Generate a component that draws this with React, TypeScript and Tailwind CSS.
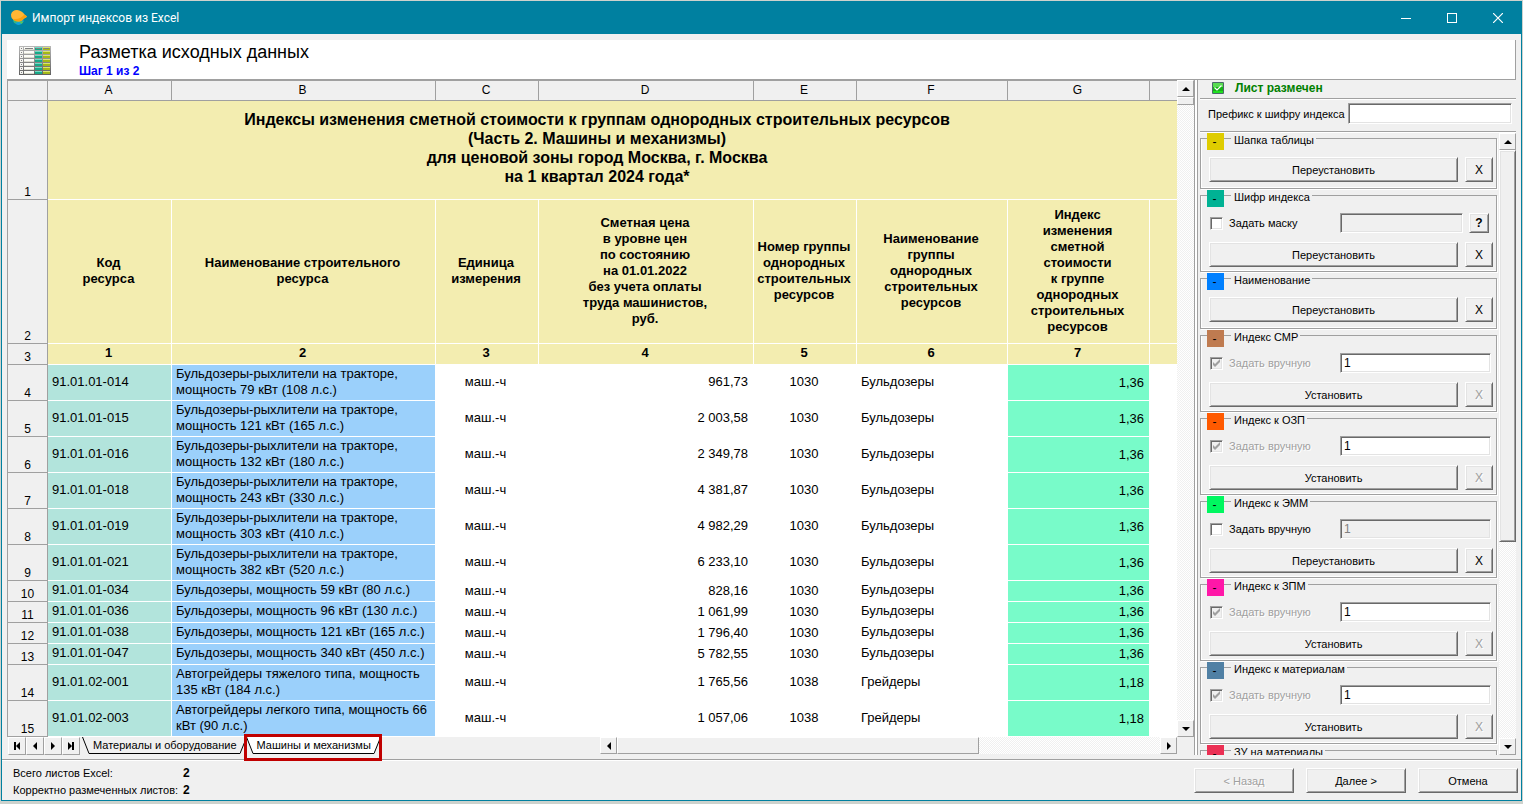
import { useState } from 'react';
import clsx from 'clsx';

const raised =
  'border border-t-white border-l-white border-r-[#696969] border-b-[#696969] bg-[#f0f0f0] shadow-[inset_1px_1px_0_#e3e3e3,inset_-1px_-1px_0_#a0a0a0]';
const sunken =
  'border border-t-[#a0a0a0] border-l-[#a0a0a0] border-r-white border-b-white shadow-[inset_1px_1px_0_#696969,inset_-1px_-1px_0_#e3e3e3]';
const flat = 'border border-t-white border-l-white border-r-[#a0a0a0] border-b-[#a0a0a0] bg-[#f0f0f0]';
const track = 'bg-[repeating-conic-gradient(#f0f0f0_0_25%,#fff_0_50%)] bg-[length:2px_2px]';
const embossed = 'text-[#a0a0a0] [text-shadow:1px_1px_0_#fff]';

type Row = { code: string; name: string; price: string; group: string; kind: string; index: string; tall?: boolean };

const rows: Row[] = [
  { code: '91.01.01-014', name: 'Бульдозеры-рыхлители на тракторе, мощность 79 кВт (108 л.с.)', price: '961,73', group: '1030', kind: 'Бульдозеры', index: '1,36', tall: true },
  { code: '91.01.01-015', name: 'Бульдозеры-рыхлители на тракторе, мощность 121 кВт (165 л.с.)', price: '2 003,58', group: '1030', kind: 'Бульдозеры', index: '1,36', tall: true },
  { code: '91.01.01-016', name: 'Бульдозеры-рыхлители на тракторе, мощность 132 кВт (180 л.с.)', price: '2 349,78', group: '1030', kind: 'Бульдозеры', index: '1,36', tall: true },
  { code: '91.01.01-018', name: 'Бульдозеры-рыхлители на тракторе, мощность 243 кВт (330 л.с.)', price: '4 381,87', group: '1030', kind: 'Бульдозеры', index: '1,36', tall: true },
  { code: '91.01.01-019', name: 'Бульдозеры-рыхлители на тракторе, мощность 303 кВт (410 л.с.)', price: '4 982,29', group: '1030', kind: 'Бульдозеры', index: '1,36', tall: true },
  { code: '91.01.01-021', name: 'Бульдозеры-рыхлители на тракторе, мощность 382 кВт (520 л.с.)', price: '6 233,10', group: '1030', kind: 'Бульдозеры', index: '1,36', tall: true },
  { code: '91.01.01-034', name: 'Бульдозеры, мощность 59 кВт (80 л.с.)', price: '828,16', group: '1030', kind: 'Бульдозеры', index: '1,36' },
  { code: '91.01.01-036', name: 'Бульдозеры, мощность 96 кВт (130 л.с.)', price: '1 061,99', group: '1030', kind: 'Бульдозеры', index: '1,36' },
  { code: '91.01.01-038', name: 'Бульдозеры, мощность 121 кВт (165 л.с.)', price: '1 796,40', group: '1030', kind: 'Бульдозеры', index: '1,36' },
  { code: '91.01.01-047', name: 'Бульдозеры, мощность 340 кВт (450 л.с.)', price: '5 782,55', group: '1030', kind: 'Бульдозеры', index: '1,36' },
  { code: '91.01.02-001', name: 'Автогрейдеры тяжелого типа, мощность 135 кВт (184 л.с.)', price: '1 765,56', group: '1038', kind: 'Грейдеры', index: '1,18', tall: true },
  { code: '91.01.02-003', name: 'Автогрейдеры легкого типа, мощность 66 кВт (90 л.с.)', price: '1 057,06', group: '1038', kind: 'Грейдеры', index: '1,18', tall: true },
];

const headings: string[][] = [
  ['Код', 'ресурса'],
  ['Наименование строительного', 'ресурса'],
  ['Единица', 'измерения'],
  ['Сметная цена', 'в уровне цен', 'по состоянию', 'на 01.01.2022', 'без учета оплаты', 'труда машинистов,', 'руб.'],
  ['Номер группы', 'однородных', 'строительных', 'ресурсов'],
  ['Наименование', 'группы', 'однородных', 'строительных', 'ресурсов'],
  ['Индекс', 'изменения', 'сметной', 'стоимости', 'к группе', 'однородных', 'строительных', 'ресурсов'],
];

type Group = {
  title: string;
  color: string;
  field?: 'mask' | 'manual';
  fixed?: boolean;
  action: string;
};

const groups: Group[] = [
  { title: 'Шапка таблицы', color: 'bg-[#dfcc00]', action: 'Переустановить' },
  { title: 'Шифр индекса', color: 'bg-[#00b294]', field: 'mask', action: 'Переустановить' },
  { title: 'Наименование', color: 'bg-[#0080ff]', action: 'Переустановить' },
  { title: 'Индекс СМР', color: 'bg-[#bf7b50]', field: 'manual', fixed: true, action: 'Установить' },
  { title: 'Индекс к ОЗП', color: 'bg-[#ff5a00]', field: 'manual', fixed: true, action: 'Установить' },
  { title: 'Индекс к ЭММ', color: 'bg-[#00f760]', field: 'manual', action: 'Переустановить' },
  { title: 'Индекс к ЗПМ', color: 'bg-[#ff17a8]', field: 'manual', fixed: true, action: 'Установить' },
  { title: 'Индекс к материалам', color: 'bg-[#5080a4]', field: 'manual', fixed: true, action: 'Установить' },
  { title: 'ЗУ на материалы', color: 'bg-[#eb3054]', field: 'manual', fixed: true, action: 'Установить' },
];

function Arrow({ dir }: { dir: 'up' | 'down' | 'left' | 'right' }) {
  const shapes = {
    up: 'M4 2 L8 6 H0 Z',
    down: 'M0 2 H8 L4 6 Z',
    left: 'M2 4 L6 0 V8 Z',
    right: 'M6 4 L2 0 V8 Z',
  };
  return (
    <svg width="8" height="8" viewBox="0 0 8 8" aria-hidden="true">
      <path d={shapes[dir]} fill="#000" />
    </svg>
  );
}

function ScrollButton({ dir, label }: { dir: 'up' | 'down' | 'left' | 'right'; label: string }) {
  return (
    <button aria-label={label} className={clsx(flat, 'flex size-[17px] shrink-0 items-center justify-center')}>
      <Arrow dir={dir} />
    </button>
  );
}

function LemonIcon() {
  return (
    <svg width="16" height="16" viewBox="0 0 16 16" aria-hidden="true">
      <path d="M2 9L13 10.5Q11 15 7 15Q3 14 2 9Z" fill="#12a5d8" />
      <path d="M2 9L8 11L4 13.5Q2 12 2 9Z" fill="#3cb878" />
      <path d="M8 11.5L12.5 11.5L10.5 14Z" fill="#58c850" />
      <path d="M0 4.5Q1 0 6 0Q11 .5 13.5 4.5L16 6.5Q15 8 13 8.5Q11 11.5 7.500 11.5Q3 11 1 8.500Q0 7 0 4.500Z" fill="#ffb634" />
      <path d="M1 8.500Q8 10.500 13.5 4.500L16 6.500Q15 8 13 8.500Q11 11.500 7.500 11.500Q3 11 1 8.500Z" fill="#f9a010" />
    </svg>
  );
}

function SheetIcon() {
  const lines = [0, 4, 8, 12, 16, 20, 24];
  return (
    <svg width="32" height="29" viewBox="0 0 32 29" shapeRendering="crispEdges" aria-hidden="true">
      <defs>
        <linearGradient id="sheet-grid" x1="0" y1="0" x2="0" y2="1">
          <stop offset="0" stopColor="#b8b8b8" />
          <stop offset="1" stopColor="#606060" />
        </linearGradient>
      </defs>
      <rect width="32" height="29" fill="url(#sheet-grid)" />
      {lines.map((y) => (
        <g key={y}>
          <rect x="1" y={y + 1} width="3" height="3" fill="#f4f4f0" />
          <rect x="2" y={y + 2} width="1" height="1" fill="#808080" />
          <rect x="5" y={y + 1} width="10" height="3" fill="#fcfcf8" />
          <rect x="5" y={y + 3} width="10" height="1" fill="#dcdcd0" />
          <rect x="16" y={y + 1} width="7" height="3" fill="#18a888" />
          <rect x="16" y={y + 1} width="7" height="1" fill="#70dcc4" />
          <rect x="24" y={y + 1} width="7" height="3" fill="#a4b818" />
          <rect x="24" y={y + 1} width="7" height="1" fill="#dce470" />
        </g>
      ))}
      <path d="M6 2.5H14M17 2.5H22M25 2.5H30" stroke="#808080" />
    </svg>
  );
}

function TitleBar() {
  return (
    <div className="flex h-[33px] shrink-0 items-center bg-[#0080a0] pl-[9px] text-white">
      <LemonIcon />
      <h1 className="flex-1 pl-[5px] font-[Roboto,sans-serif] text-[12px] leading-4">Импорт индексов из Excel</h1>
      <button aria-label="Свернуть" className="flex h-full w-[46px] items-center justify-center">
        <svg width="10" height="10" viewBox="0 0 10 10" shapeRendering="crispEdges">
          <path d="M0 5.5H10" stroke="#fff" />
        </svg>
      </button>
      <button aria-label="Развернуть" className="flex h-full w-[46px] items-center justify-center">
        <svg width="10" height="10" viewBox="0 0 10 10" shapeRendering="crispEdges">
          <path d="M.5 .5H9.5V9.5H.5Z" stroke="#fff" fill="none" />
        </svg>
      </button>
      <button aria-label="Закрыть" className="flex h-full w-[46px] items-center justify-center">
        <svg width="10" height="10" viewBox="0 0 10 10">
          <path d="M0 0L10 10M10 0L0 10" stroke="#fff" strokeWidth="1.2" />
        </svg>
      </button>
    </div>
  );
}

function SheetTable() {
  const th = 'border-r border-b border-[#a0a0a0] bg-[#f0f0f0] font-normal text-[12px] leading-[14px]';
  const num = clsx(th, 'border-l align-bottom');
  const head = 'border-r border-b border-white bg-[#f3edb0] pr-[2px] pb-[2px] text-center font-bold';
  return (
    <table className="w-full table-fixed border-separate border-spacing-0 text-[13px] leading-4">
      <colgroup>
        <col className="w-[41px]" />
        <col className="w-[124px]" />
        <col className="w-[264px]" />
        <col className="w-[103px]" />
        <col className="w-[215px]" />
        <col className="w-[103px]" />
        <col className="w-[151px]" />
        <col className="w-[142px]" />
        <col />
      </colgroup>
      <thead>
        <tr className="h-[21px]">
          <th className={clsx(th, 'border-t border-l')} />
          {['A', 'B', 'C', 'D', 'E', 'F', 'G'].map((c) => (
            <th key={c} scope="col" className={clsx(th, 'border-t pr-[2px] pb-[2px]')}>{c}</th>
          ))}
          <th className="border-t border-b border-[#a0a0a0] bg-[#f0f0f0]" />
        </tr>
      </thead>
      <tbody>
        <tr className="h-[99px]">
          <th scope="row" className={num}>1</th>
          <td colSpan={7} className="border-b border-white bg-[#f3edb0] pt-[9px] pr-1 text-center align-top text-[16px] leading-[19px] font-bold">
            Индексы изменения сметной стоимости к группам однородных строительных ресурсов
            <br />
            (Часть 2. Машины и механизмы)
            <br />
            для ценовой зоны город Москва, г. Москва
            <br />
            на 1 квартал 2024 года*
          </td>
          <td className="border-b border-white bg-[#f3edb0]" />
        </tr>
        <tr className="h-[144px]">
          <th scope="row" className={num}>2</th>
          {headings.map((lines, i) => (
            <td key={i} className={head}>
              {lines.map((line) => (
                <div key={line}>{line}</div>
              ))}
            </td>
          ))}
          <td className="border-b border-white bg-[#f3edb0]" />
        </tr>
        <tr className="h-[21px]">
          <th scope="row" className={num}>3</th>
          {headings.map((_, i) => (
            <td key={i} className={head}>{i + 1}</td>
          ))}
          <td className="border-b border-white bg-[#f3edb0]" />
        </tr>
        {rows.map((row, i) => (
          <tr key={row.code} className={row.tall ? 'h-[36px]' : 'h-[21px]'}>
            <th scope="row" className={num}>{i + 4}</th>
            <td className="border-r border-b border-white bg-[#b2e4dc] pb-[2px] pl-1">{row.code}</td>
            <td className="border-r border-b border-white bg-[#9bd0fb] pb-[2px] pl-1">{row.name}</td>
            <td className="bg-white pr-1 pb-[2px] text-center">маш.-ч</td>
            <td className="bg-white pr-[6px] pb-[2px] text-right">{row.price}</td>
            <td className="bg-white pr-[3px] pb-[2px] text-center">{row.group}</td>
            <td className="bg-white pb-[3px] pl-1">{row.kind}</td>
            <td className="border-r border-b border-white bg-[#78fbc9] pr-[5px] text-right">{row.index}</td>
            <td className="bg-white" />
          </tr>
        ))}
      </tbody>
    </table>
  );
}

function SheetTab({ label, active, onClick }: { label: string; active: boolean; onClick: () => void }) {
  const fill = active ? '#fff' : '#f0f0f0';
  return (
    <button role="tab" aria-selected={active} onClick={onClick} className="flex h-[18px]">
      <svg width="8" height="18" viewBox="0 0 8 18" aria-hidden="true">
        <path d="M0 0L7 16.5H8V0Z" fill={fill} />
        <path d="M.5 0L7 16.5H8" fill="none" stroke="#000" />
      </svg>
      <span className={clsx('h-[17px] border-b border-black px-[3px] leading-[17px]', active ? 'bg-white' : 'bg-[#f0f0f0]')}>{label}</span>
      <svg width="6" height="18" viewBox="0 0 6 18" aria-hidden="true">
        <path d="M0 16.5L5.5 0H0Z" fill={fill} />
        <path d="M0 16.5L5.5 3" fill="none" stroke="#000" />
      </svg>
    </button>
  );
}

function SheetBar() {
  const [active, setActive] = useState(1);
  const navs = [
    { label: 'Первый лист', d: 'M1 0H3V8H1ZM7 0V8L3 4Z' },
    { label: 'Предыдущий лист', d: 'M6 0V8L2 4Z' },
    { label: 'Следующий лист', d: 'M2 0V8L6 4Z' },
    { label: 'Последний лист', d: 'M5 0H7V8H5ZM1 0V8L5 4Z' },
  ];
  return (
    <div className="flex h-[18px] shrink-0 pl-px">
      {navs.map((nav) => (
        <button key={nav.label} aria-label={nav.label} className={clsx(flat, 'flex w-[18px] items-center justify-center')}>
          <svg width="8" height="8" viewBox="0 0 8 8" aria-hidden="true">
            <path d={nav.d} />
          </svg>
        </button>
      ))}
      <div role="tablist" className="ml-[2px] flex">
        <SheetTab label="Материалы и оборудование" active={active === 0} onClick={() => setActive(0)} />
        <div className="relative">
          <SheetTab label="Машины и механизмы" active={active === 1} onClick={() => setActive(1)} />
          <div className="pointer-events-none absolute -inset-x-[2px] -top-[3px] -bottom-[6px] z-10 border-3 border-[#c00000]" />
        </div>
      </div>
      <div className="flex-1" />
      <div className="flex w-[577px]">
        <ScrollButton dir="left" label="Прокрутить влево" />
        <div className={clsx(track, 'h-[17px] flex-1')}>
          <div className={clsx(flat, 'h-full w-2/3')} />
        </div>
        <ScrollButton dir="right" label="Прокрутить вправо" />
      </div>
    </div>
  );
}

function Check({ label, checked, disabled }: { label: string; checked: boolean; disabled?: boolean }) {
  return (
    <label className="flex w-[130px] shrink-0 items-center">
      <span className="relative size-[13px]">
        <input
          type="checkbox"
          defaultChecked={checked}
          disabled={disabled}
          className={clsx(sunken, 'peer block size-[13px] appearance-none', disabled ? 'bg-[#f0f0f0]' : 'bg-white')}
        />
        <svg className="pointer-events-none absolute inset-0 hidden peer-checked:block" width="13" height="13" viewBox="0 0 13 13" aria-hidden="true">
          <path d="M3 5V8L5 10L10 5V2L5 7Z" fill={disabled ? '#a0a0a0' : '#000'} />
        </svg>
      </span>
      <span className={clsx('pl-[6px]', disabled && embossed)}>{label}</span>
    </label>
  );
}

function GroupBox({ group }: { group: Group }) {
  const { title, color, field, fixed, action } = group;
  return (
    <fieldset
      className={clsx(
        'mb-px min-w-0 shrink-0 border border-[#a0a0a0] pr-[3px] pl-2 shadow-[inset_1px_-1px_0_#fff,1px_1px_0_#fff]',
        field ? 'pt-3 pb-1' : 'pt-[13px] pb-[6px]',
      )}
    >
      <legend className="-ml-[2px] flex h-[11px] bg-[#f0f0f0] pr-[2px]">
        <button aria-label={`Свернуть: ${title}`} className={clsx(color, 'size-[17px] pr-[2px] text-[12px] leading-[14px]')}>
          -
        </button>
        <span className="mt-[5px] mr-[3px] h-px w-[7px] bg-[#a0a0a0]" />
        <span className="leading-[14px]">{title}</span>
      </legend>
      {field && (
        <div className="mb-[9px] flex h-5 items-center pl-px">
          <Check label={field === 'mask' ? 'Задать маску' : 'Задать вручную'} checked={!!fixed} disabled={fixed} />
          <input
            aria-label={title}
            defaultValue={field === 'mask' ? '' : '1'}
            disabled={!fixed}
            className={clsx(sunken, 'mr-[2px] h-full min-w-0 flex-1 px-[3px] text-[12px]', fixed ? 'bg-white' : 'bg-[#f0f0f0] text-[#808080]')}
          />
          {field === 'mask' && (
            <button aria-label="Справка" className={clsx(raised, 'mx-1 h-5 w-5 shrink-0 text-[12px] font-bold')}>?</button>
          )}
        </div>
      )}
      <div className="flex h-[25px] gap-[7px]">
        <button className={clsx(raised, 'flex-1')}>{action}</button>
        <button aria-label={`Очистить: ${title}`} disabled={fixed} className={clsx(raised, 'w-7 text-[12px]', fixed && embossed)}>X</button>
      </div>
    </fieldset>
  );
}

function SidePanel() {
  return (
    <aside className="flex w-[316px] shrink-0 flex-col">
      <div className="flex h-[19px] items-center border-b border-[#a0a0a0] pb-[3px] pl-3">
        <svg width="12" height="12" viewBox="0 0 12 12" aria-hidden="true">
          <rect width="12" height="12" rx="1" fill="#4a6a68" />
          <rect x="1" y="1" width="10" height="10" fill="#14b414" />
          <rect x="1" y="1" width="10" height="4" fill="#58dc50" />
          <rect x="1" y="9" width="10" height="2" fill="#20e020" />
          <path d="M2.500 5.500L5 8L9.500 3.500" fill="none" stroke="#fff" strokeWidth="1.200" />
        </svg>
        <strong className="pl-[11px] text-[12px] text-[#008000]">Лист размечен</strong>
      </div>
      <div className="flex h-[33px] items-center border-t border-b border-t-white border-b-[#a0a0a0] pr-1 pb-1 pl-2">
        <label htmlFor="prefix" className="w-[140px] whitespace-nowrap">Префикс к шифру индекса</label>
        <input id="prefix" className={clsx(sunken, 'h-[21px] min-w-0 flex-1 bg-white px-[3px]')} />
      </div>
      <div className="flex min-h-0 flex-1 border-t border-white">
        <div className="flex min-w-0 flex-1 flex-col overflow-hidden pr-[2px]">
          {groups.map((g) => (
            <GroupBox key={g.title} group={g} />
          ))}
        </div>
        <div className={clsx(track, 'flex w-[17px] flex-col')}>
          <ScrollButton dir="up" label="Прокрутить вверх" />
          <div className="flex-1">
            <div className={clsx(raised, 'h-2/3 w-full')} />
          </div>
          <ScrollButton dir="down" label="Прокрутить вниз" />
        </div>
      </div>
    </aside>
  );
}

export default function App() {
  return (
    <div className="flex h-screen min-h-[400px] flex-col overflow-hidden bg-[#cdd2cd] pt-px pr-px pb-[3px] pl-px font-['Liberation_Sans',Arial,sans-serif] text-[11px] leading-[14px] text-black">
      <div className="flex min-h-0 flex-1 flex-col border-r border-b border-l border-[#0080a0] bg-[#f0f0f0]">
        <TitleBar />

        {/* Wizard header */}
        <header className="mx-[5px] mt-[6px] flex h-10 shrink-0 gap-7 border-r border-b border-[#a0a0a0] bg-white pt-[6px] pl-3">
          <SheetIcon />
          <div className="-mt-1">
            <h2 className="text-[18px] leading-5">Разметка исходных данных</h2>
            <p className="pt-[2px] text-[12px] font-bold text-[#0000ff]">Шаг 1 из 2</p>
          </div>
        </header>

        <main className="mx-[5px] flex min-h-0 flex-1">
          <div className="flex min-w-0 flex-1 flex-col">
            <div className="flex min-h-0 flex-1">
              <div className="min-w-0 flex-1 overflow-hidden bg-white">
                <SheetTable />
              </div>
              <div className={clsx(track, 'flex w-[17px] flex-col')}>
                <ScrollButton dir="up" label="Прокрутить вверх" />
                <div className="flex-1">
                  <div className={clsx(flat, 'h-[8px] w-full')} />
                </div>
                <ScrollButton dir="down" label="Прокрутить вниз" />
              </div>
            </div>
            <div className="pr-[17px]">
              <SheetBar />
            </div>
          </div>
          <div className="mr-[2px] w-1 border-r border-l border-[#a0a0a0] bg-white" />
          <SidePanel />
        </main>

        <footer className="mt-1 flex h-[41px] shrink-0 items-start justify-between border-t border-[#a0a0a0] pl-[11px] shadow-[inset_0_1px_0_#fff]">
          <dl className="grid grid-cols-[170px_auto] gap-y-[3px] pt-[6px]">
            <dt>Всего листов Excel:</dt>
            <dd className="text-[12px] font-bold">2</dd>
            <dt className="whitespace-nowrap">Корректно размеченных листов:</dt>
            <dd className="text-[12px] font-bold">2</dd>
          </dl>
          <div className="flex gap-3 pt-2 pr-[3px]">
            <button disabled className={clsx(raised, embossed, 'h-[25px] w-[100px]')}>&lt; Назад</button>
            <button className={clsx(raised, 'h-[25px] w-[100px]')}>Далее &gt;</button>
            <button className={clsx(raised, 'h-[25px] w-[100px]')}>Отмена</button>
          </div>
        </footer>
      </div>
    </div>
  );
}
